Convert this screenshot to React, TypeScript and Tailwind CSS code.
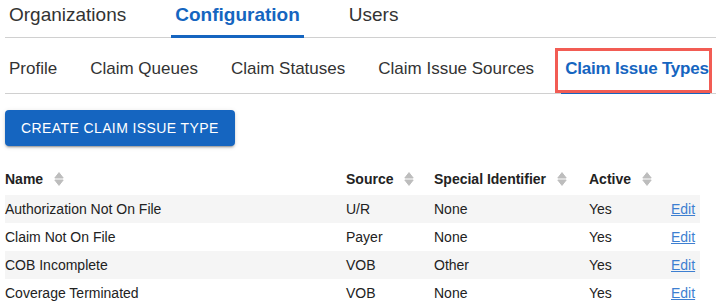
const topTabs = [
  { label: "Organizations", active: false },
  { label: "Configuration", active: true },
  { label: "Users", active: false },
];

const subTabs = ["Profile", "Claim Queues", "Claim Statuses", "Claim Issue Sources"];

const rows = [
  { name: "Authorization Not On File", source: "U/R", special: "None", active: "Yes" },
  { name: "Claim Not On File", source: "Payer", special: "None", active: "Yes" },
  { name: "COB Incomplete", source: "VOB", special: "Other", active: "Yes" },
  { name: "Coverage Terminated", source: "VOB", special: "None", active: "Yes" },
];

const SortIcon = () => (
  <svg width="10" height="16" viewBox="0 0 10 16" className="ml-[11px] shrink-0">
    <path d="M0.8 7 L5 1.6 L9.2 7 Z" fill="#bdbdbd" stroke="#bdbdbd" strokeWidth="1" strokeLinejoin="round" />
    <path d="M0.8 9 L5 14.4 L9.2 9 Z" fill="#bdbdbd" stroke="#bdbdbd" strokeWidth="1" strokeLinejoin="round" />
  </svg>
);

const HeaderCell = ({ label }: { label: string }) => (
  <div className="flex items-center font-bold">
    <span>{label}</span>
    <SortIcon />
  </div>
);

const App = () => {
  return (
    <div className="min-h-[307px] w-[716px] overflow-hidden bg-white pl-[5px] font-['Liberation_Sans',Arial,sans-serif] text-[#333]">
      {/* top level tabs */}
      <div className="flex gap-[41px] border-b border-[#d0d0d0]">
        {topTabs.map((t) => (
          <div
            key={t.label}
            className={
              t.active
                ? "-mb-px h-[38px] border-b-[3px] border-[#1565c0] px-[4px] pt-[4px] text-[19px] leading-[22px] font-bold text-[#1565c0]"
                : "-mb-px h-[38px] border-b-[3px] border-transparent px-[4px] pt-[4px] text-[19px] leading-[22px]"
            }
          >
            {t.label}
          </div>
        ))}
      </div>

      {/* config sub tabs */}
      <div className="flex gap-[25px] border-b border-[#d0d0d0]">
        {subTabs.map((t) => (
          <div
            key={t}
            className="-mb-px h-[56px] shrink-0 border-b-[3px] border-transparent px-[4px] pt-[21px] text-[17px] leading-[20px] whitespace-nowrap"
          >
            {t}
          </div>
        ))}
        <div className="relative -mb-px -ml-[2px] h-[56px] w-[149px] shrink-0 border-b-[3px] border-[#1565c0] pl-[4px] pt-[21px] text-[17px] leading-[20px] font-bold tracking-[-0.2px] whitespace-nowrap text-[#1565c0]">
          Claim Issue Types
          <span className="pointer-events-none absolute -left-[6px] -right-[2px] top-[10px] -bottom-[2px] border-[3px] border-[#f25c54]" />
        </div>
      </div>

      <button className="mt-4 h-[36px] rounded-[4px] bg-[#1565c0] px-4 text-[14px] tracking-[0.4px] text-white shadow-[0_3px_1px_-2px_rgba(0,0,0,0.2),0_2px_2px_0_rgba(0,0,0,0.14),0_1px_5px_0_rgba(0,0,0,0.12)]">
        CREATE CLAIM ISSUE TYPE
      </button>

      <div className="mt-4 w-[695px] text-[14px] text-[#222]">
        <div className="grid h-[33px] grid-cols-[341px_88px_155px_82px_1fr] items-center pt-[1px]">
          <HeaderCell label="Name" />
          <HeaderCell label="Source" />
          <HeaderCell label="Special Identifier" />
          <HeaderCell label="Active" />
          <div />
        </div>
        {rows.map((r, i) => (
          <div
            key={r.name}
            className={
              i % 2 === 0
                ? "grid h-[28px] grid-cols-[341px_88px_155px_82px_1fr] items-center bg-[#f5f5f5]"
                : "grid h-[28px] grid-cols-[341px_88px_155px_82px_1fr] items-center"
            }
          >
            <div>{r.name}</div>
            <div>{r.source}</div>
            <div>{r.special}</div>
            <div>{r.active}</div>
            <a href="#" className="text-[#3d7fd1] underline">
              Edit
            </a>
          </div>
        ))}
      </div>
    </div>
  );
};

export default App;
